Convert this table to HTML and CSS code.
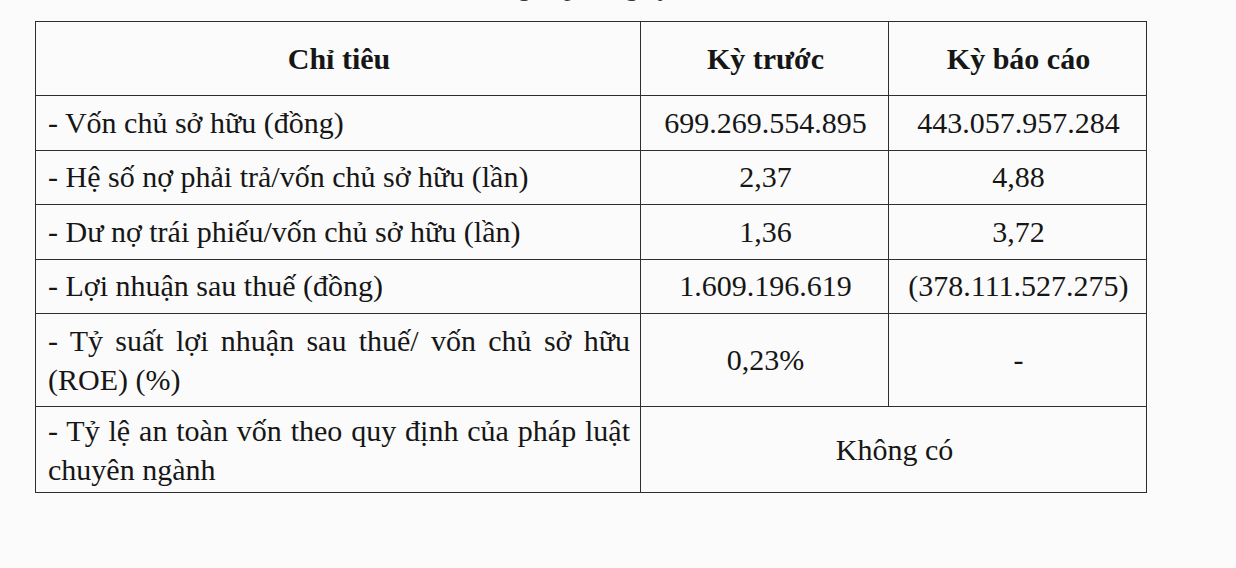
FILE: index.html
```html
<!DOCTYPE html>
<html lang="vi">
<head>
<meta charset="utf-8">
<title>Chỉ tiêu tài chính</title>
<link rel="stylesheet" href="styles.css">
</head>
<body>
<div class="page">
  <p class="lead">Các chỉ tiêu tài chính tổng hợp trong kỳ:</p>
  <table class="report">
    <colgroup>
      <col class="c-name">
      <col class="c-prev">
      <col class="c-cur">
    </colgroup>
    <thead>
      <tr class="r-head">
        <th>Chỉ tiêu</th>
        <th>Kỳ trước</th>
        <th>Kỳ báo cáo</th>
      </tr>
    </thead>
    <tbody>
      <tr class="r-one">
        <td class="name">- Vốn chủ sở hữu (đồng)</td>
        <td class="num">699.269.554.895</td>
        <td class="num">443.057.957.284</td>
      </tr>
      <tr class="r-one">
        <td class="name">- Hệ số nợ phải trả/vốn chủ sở hữu (lần)</td>
        <td class="num">2,37</td>
        <td class="num">4,88</td>
      </tr>
      <tr class="r-one">
        <td class="name">- Dư nợ trái phiếu/vốn chủ sở hữu (lần)</td>
        <td class="num">1,36</td>
        <td class="num">3,72</td>
      </tr>
      <tr class="r-one">
        <td class="name">- Lợi nhuận sau thuế (đồng)</td>
        <td class="num">1.609.196.619</td>
        <td class="num">(378.111.527.275)</td>
      </tr>
      <tr class="r-two">
        <td class="name wrap">- Tỷ suất lợi nhuận sau thuế/ vốn chủ sở hữu (ROE) (%)</td>
        <td class="num">0,23%</td>
        <td class="num">-</td>
      </tr>
      <tr class="r-last">
        <td class="name wrap">- Tỷ lệ an toàn vốn theo quy định của pháp luật chuyên ngành</td>
        <td class="num" colspan="2">Không có</td>
      </tr>
    </tbody>
  </table>
</div>
</body>
</html>
```

FILE: styles.css
```css
html, body {
  margin: 0;
  padding: 0;
  background: #fbfbfb;
}

body {
  font-family: "Liberation Serif", "Times New Roman", "DejaVu Serif", serif;
  color: #161616;
  overflow: hidden;
}

.page {
  padding: 0 0 0 35px;
}

.lead {
  margin: -29px 0 16px 0;
  padding-left: 222px;
  height: 34px;
  line-height: 34px;
  font-size: 26px;
  white-space: nowrap;
  color: #3a3a3a;
}

.report {
  border-collapse: collapse;
  table-layout: fixed;
  width: 1111px;
  font-size: 30px;
}

.c-name { width: 605px; }
.c-prev { width: 248px; }
.c-cur { width: 258px; }

.report th,
.report td {
  border: 1.5px solid #2e2e2e;
  vertical-align: middle;
  padding: 0 10px 0 12px;
}

.report th {
  font-weight: bold;
  text-align: center;
}

.r-head { height: 74px; }
.r-one { height: 54.5px; }
.r-two { height: 93px; }
.r-last { height: 86px; }

.name {
  text-align: left;
  white-space: nowrap;
}

.name.wrap {
  white-space: normal;
  text-align: justify;
  line-height: 39px;
}

.num {
  text-align: center;
  white-space: nowrap;
  padding: 0 4px;
}
```
